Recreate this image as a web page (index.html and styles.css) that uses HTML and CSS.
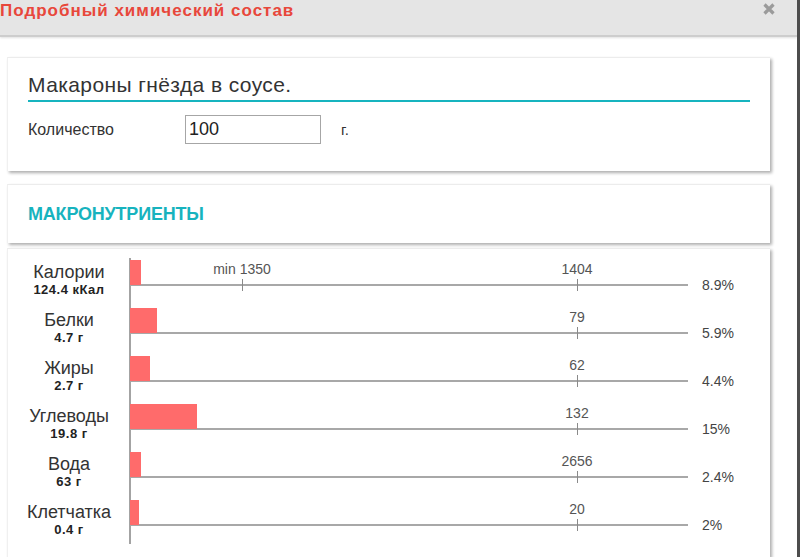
FILE: index.html
```html
<!DOCTYPE html>
<html lang="ru">
<head>
<meta charset="utf-8">
<title>Подробный химический состав</title>
<link rel="stylesheet" href="styles.css">
</head>
<body>
<div class="modal">
  <header class="modal-head">
    <h1 class="modal-title">Подробный химический состав</h1>
    <button class="close" aria-label="Закрыть">
      <svg viewBox="0 0 14 14" width="14" height="14"><path d="M2.5 2.5 L11.5 11.5 M11.5 2.5 L2.5 11.5" stroke="#9b9b9b" stroke-width="3.2" stroke-linecap="butt" fill="none"/></svg>
    </button>
  </header>
  <div class="modal-body">
    <section class="card card-product">
      <div class="product-name">Макароны гнёзда в соусе.</div>
      <div class="qty-row">
        <span class="qty-label">Количество</span>
        <input class="qty-input" type="text" value="100">
        <span class="qty-unit">г.</span>
      </div>
    </section>
    <section class="card card-heading">
      <h2 class="section-title">МАКРОНУТРИЕНТЫ</h2>
    </section>
    <section class="card card-chart">
      <div class="chart">
        <div class="row">
          <div class="lbl"><div class="name">Калории</div><div class="val">124.4 кКал</div></div>
          <div class="track">
            <div class="bar" style="width:11px"></div>
            <div class="line"></div>
            <div class="tick" style="left:112px"><span class="tick-text">min 1350</span></div>
            <div class="tick" style="left:447px"><span class="tick-text">1404</span></div>
          </div>
          <div class="pct">8.9%</div>
        </div>
        <div class="row">
          <div class="lbl"><div class="name">Белки</div><div class="val">4.7 г</div></div>
          <div class="track">
            <div class="bar" style="width:27px"></div>
            <div class="line"></div>
            <div class="tick" style="left:447px"><span class="tick-text">79</span></div>
          </div>
          <div class="pct">5.9%</div>
        </div>
        <div class="row">
          <div class="lbl"><div class="name">Жиры</div><div class="val">2.7 г</div></div>
          <div class="track">
            <div class="bar" style="width:20px"></div>
            <div class="line"></div>
            <div class="tick" style="left:447px"><span class="tick-text">62</span></div>
          </div>
          <div class="pct">4.4%</div>
        </div>
        <div class="row">
          <div class="lbl"><div class="name">Углеводы</div><div class="val">19.8 г</div></div>
          <div class="track">
            <div class="bar" style="width:67px"></div>
            <div class="line"></div>
            <div class="tick" style="left:447px"><span class="tick-text">132</span></div>
          </div>
          <div class="pct">15%</div>
        </div>
        <div class="row">
          <div class="lbl"><div class="name">Вода</div><div class="val">63 г</div></div>
          <div class="track">
            <div class="bar" style="width:11px"></div>
            <div class="line"></div>
            <div class="tick" style="left:447px"><span class="tick-text">2656</span></div>
          </div>
          <div class="pct">2.4%</div>
        </div>
        <div class="row">
          <div class="lbl"><div class="name">Клетчатка</div><div class="val">0.4 г</div></div>
          <div class="track">
            <div class="bar" style="width:9px"></div>
            <div class="line"></div>
            <div class="tick" style="left:447px"><span class="tick-text">20</span></div>
          </div>
          <div class="pct">2%</div>
        </div>
      </div>
    </section>
  </div>
</div>
</body>
</html>
```
FILE: styles.css
```css
* { box-sizing: border-box; }
html, body {
  margin: 0;
  padding: 0;
  background: #fff;
  overflow: hidden;
  font-family: "Liberation Sans", Arial, sans-serif;
  color: #333;
}
.modal {
  width: 800px;
  height: 557px;
  border-right: 3px solid #4d4d4d;
  background: #fff;
  display: flex;
  flex-direction: column;
  overflow: hidden;
}
.modal-head {
  flex: none;
  height: 37px;
  background: #e5e5e5;
  border-bottom: 2px solid #cdcdcd;
  display: flex;
  align-items: flex-start;
  justify-content: space-between;
  position: relative;
  z-index: 1;
  box-shadow: 0 1px 2px rgba(0,0,0,0.12);
}
.modal-title {
  margin: 0;
  padding: 1px 0 0 0;
  font-size: 17px;
  line-height: 19px;
  font-weight: bold;
  letter-spacing: 1px;
  color: #e8473b;
}
.close {
  border: 0;
  background: none;
  padding: 0;
  margin: 2px 21px 0 0;
  width: 14px;
  height: 14px;
  display: flex;
}
.modal-body {
  flex: 1;
  padding: 20px 27px 0 7px;
  display: flex;
  flex-direction: column;
}
.card {
  background: #fff;
  border-top: 1px solid #ececec;
  border-left: 1px solid #f0f0f0;
  box-shadow: 2px 2px 3px rgba(0,0,0,0.32);
}
.card-product {
  height: 114px;
  padding: 15px 20px 0 20px;
}
.product-name {
  font-size: 21px;
  line-height: 24px;
  letter-spacing: 0.4px;
  color: #333;
  padding-bottom: 3px;
  border-bottom: 2px solid #17b4bf;
}
.qty-row {
  display: flex;
  align-items: center;
  margin-top: 13px;
}
.qty-label {
  width: 157px;
  font-size: 16px;
  color: #333;
}
.qty-input {
  width: 136px;
  height: 29px;
  border: 1px solid #a6a6a6;
  padding: 0 3px;
  font-family: inherit;
  font-size: 18px;
  color: #222;
  background: #fff;
  border-radius: 0;
  outline: none;
}
.qty-unit {
  margin-left: 20px;
  font-size: 15px;
  color: #333;
}
.card-heading {
  margin-top: 13px;
  height: 59px;
  padding: 0 20px;
  display: flex;
  align-items: center;
}
.section-title {
  margin: 0;
  font-size: 18px;
  font-weight: bold;
  letter-spacing: -0.2px;
  color: #17b3be;
  padding-top: 1px;
}
.card-chart {
  margin-top: 5px;
  flex: 1;
  padding-top: 11px;
}
.chart {
  position: relative;
}
.chart::before {
  content: "";
  position: absolute;
  left: 121px;
  top: -2px;
  bottom: 4px;
  width: 2px;
  background: #a3a3a3;
}
.row {
  display: flex;
  height: 48px;
}
.lbl {
  width: 122px;
  flex: none;
  text-align: center;
  padding-top: 3px;
}
.name {
  font-size: 18px;
  line-height: 19px;
  color: #333;
}
.val {
  margin-top: 1px;
  font-size: 13px;
  line-height: 14px;
  font-weight: bold;
  letter-spacing: 0.5px;
  color: #222;
}
.track {
  position: relative;
  width: 558px;
  flex: none;
}
.bar {
  position: relative;
  z-index: 1;
  height: 25px;
  background: #ff6b6b;
}
.line {
  margin-top: -1px;
  height: 2px;
  background: #a8a8a8;
}
.tick {
  position: absolute;
  top: 19px;
  width: 1px;
  height: 12px;
  background: #8a8a8a;
}
.tick-text {
  position: absolute;
  bottom: 14px;
  left: 0;
  transform: translateX(-50%);
  white-space: nowrap;
  font-size: 14px;
  line-height: 16px;
  color: #555;
}
.pct {
  margin-left: 14px;
  padding-top: 17px;
  font-size: 14px;
  line-height: 16px;
  color: #444;
}
```
